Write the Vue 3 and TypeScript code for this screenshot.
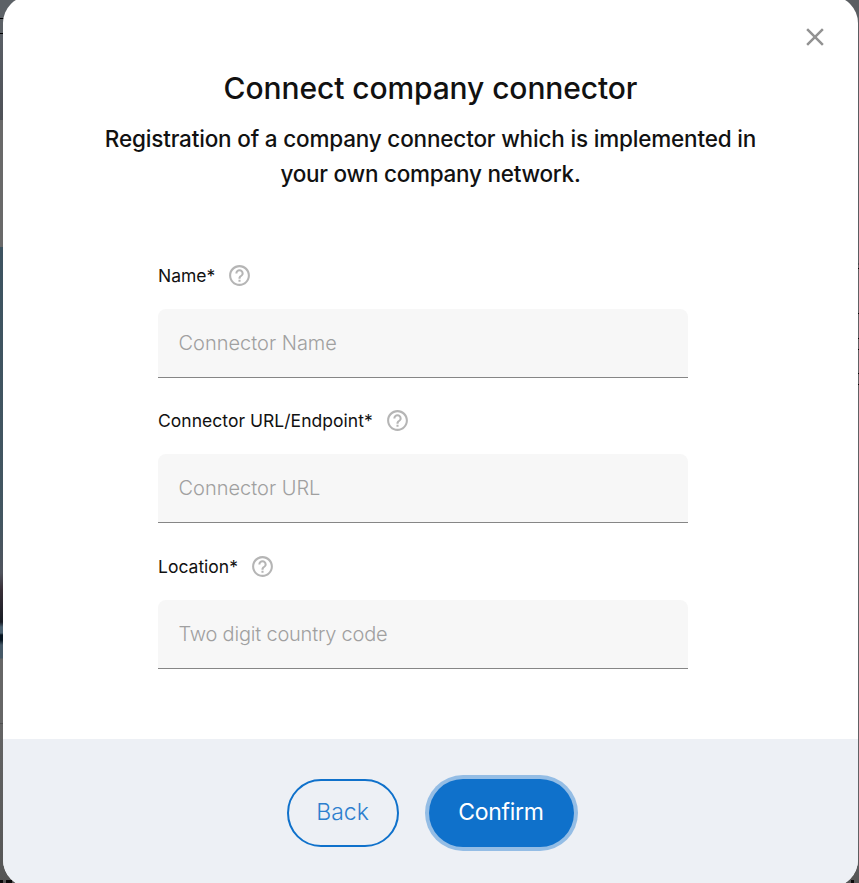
<script setup lang="ts">
import { ref } from 'vue'

interface Field {
  id: string
  label: string
  placeholder: string
}

const fields: Field[] = [
  { id: 'name', label: 'Name*', placeholder: 'Connector Name' },
  { id: 'url', label: 'Connector URL/Endpoint*', placeholder: 'Connector URL' },
  { id: 'location', label: 'Location*', placeholder: 'Two digit country code' },
]

const values = ref<Record<string, string>>({ name: '', url: '', location: '' })
</script>

<template>
  <div class="backdrop">
    <div class="page-edge left"></div>
    <div class="page-edge right"></div>
    <section class="dialog" role="dialog" aria-labelledby="dialog-title">
      <button class="close" type="button" aria-label="Close">
        <svg viewBox="0 0 24 24" width="30" height="30">
          <path d="M19 6.41 17.59 5 12 10.59 6.41 5 5 6.41 10.59 12 5 17.59 6.41 19 12 13.41 17.59 19 19 17.59 13.41 12z" />
        </svg>
      </button>
      <header class="heading">
        <h1 id="dialog-title">Connect company connector</h1>
        <p><span class="line-a">Registration of a company connector which is implemented in</span><br /><span class="line-b">your own company network.</span></p>
      </header>
      <form class="fields" @submit.prevent>
        <div v-for="field in fields" :key="field.id" class="field">
          <div class="label-row">
            <label :for="field.id" :class="`label-${field.id}`">{{ field.label }}</label>
            <svg class="help" viewBox="0 0 24 24" width="25" height="25">
              <path d="M11 18h2v-2h-2v2zm1-16C6.48 2 2 6.48 2 12s4.48 10 10 10 10-4.48 10-10S17.52 2 12 2zm0 18c-4.41 0-8-3.59-8-8s3.59-8 8-8 8 3.59 8 8-3.59 8-8 8zm0-14c-2.21 0-4 1.79-4 4h2c0-1.1.9-2 2-2s2 .9 2 2c0 2-3 1.75-3 5h2c0-2.25 3-2.5 3-5 0-2.21-1.79-4-4-4z" />
            </svg>
          </div>
          <input :id="field.id" v-model="values[field.id]" :class="`input-${field.id}`" type="text" :placeholder="field.placeholder" />
        </div>
      </form>
      <footer class="actions">
        <button class="btn back" type="button">Back</button>
        <button class="btn confirm" type="button">Confirm</button>
      </footer>
    </section>
  </div>
</template>

<style>
body {
  overflow: hidden;
}
</style>

<style scoped>
.backdrop {
  position: relative;
  box-sizing: border-box;
  height: 883px;
  padding: 0 1px 0 3px;
  overflow: hidden;
  background: #606164;
  font-family: Inter, "Liberation Sans", sans-serif;
  color: #111;
}

.page-edge {
  position: absolute;
  top: 0;
  width: 14px;
  height: 883px;
}

.page-edge.left {
  left: 0;
  background:
    linear-gradient(#0a0a0a, #0a0a0a) 0 880px / 3px 3px no-repeat,
    linear-gradient(#0a0a0a, #0a0a0a) 6px 880px / 6px 3px no-repeat,
    linear-gradient(
      #5c6166 0 18px, #000 18px 19px, #5c6166 19px 33px, #000 33px 34px,
      #5a5f66 34px, #4e5157 120px, #696969 120px 247px, #3d5360 247px,
      #435661 520px, #50545d 573px, #382f37 590px, #181c24 622px,
      #4a6070 627px 633px, #061521 635px 640px, #465967 645px 658px,
      #666 659px 723px, #505050 723px 724px, #646464 724px, #555 883px
    );
}

.page-edge.right {
  right: 0;
  background:
    linear-gradient(#0a0a0a, #0a0a0a) 6px 880px / 3px 3px no-repeat,
    linear-gradient(
      #5a5d61 0 263px, #45484c 263px 265px, #606164 265px 268px, #000 268px 269px,
      #606164 269px 313px, #000 313px 314px, #606164 314px 338px, #000 338px 339px,
      #606164 339px 349px, #000 349px 350px, #606164 350px 373px, #000 373px 374px,
      #606164 374px 384px, #000 384px 385px, #606164 385px 840px, #555 883px
    );
}

.dialog {
  position: relative;
  display: flex;
  flex-direction: column;
  box-sizing: border-box;
  height: 891px;
  margin-top: -4px;
  overflow: hidden;
  border-radius: 27px;
  background: #fff;
}

.close {
  position: absolute;
  top: 26px;
  right: 28px;
  width: 30px;
  height: 30px;
  padding: 0;
  border: 0;
  background: none;
}

.close svg {
  display: block;
  fill: #939393;
}

.heading {
  padding-top: 70px;
  text-align: center;
}

h1 {
  margin: 0;
  font-size: 30px;
  line-height: 44px;
  font-weight: 500;
  letter-spacing: -0.1px;
}

.heading p {
  margin: 11px 0 0;
  font-size: 22.5px;
  line-height: 35px;
  font-weight: 500;
  white-space: nowrap;
}

.line-a {
  letter-spacing: -0.18px;
}

.line-b {
  letter-spacing: -0.26px;
}

.fields {
  display: flex;
  flex-direction: column;
  gap: 30.4px;
  width: 530px;
  margin: 72px 0 0 155px;
}

.field {
  display: flex;
  flex-direction: column;
  gap: 21px;
  height: 115px;
}

.label-row {
  display: flex;
  align-items: center;
  gap: 12px;
  height: 25px;
}

label {
  font-size: 17.5px;
  line-height: 25px;
}

.label-url {
  letter-spacing: 0.03px;
}

.help {
  fill: #b5b5b5;
}

input {
  box-sizing: border-box;
  width: 530px;
  height: 69px;
  padding: 0 20.5px;
  border: 0;
  border-bottom: 1px solid #868686;
  border-radius: 8px 8px 0 0;
  outline: 0;
  background: #f7f7f7;
  font: 300 20px Inter, "Liberation Sans", sans-serif;
  color: #111;
}

.input-location {
  letter-spacing: -0.2px;
}

input::placeholder {
  color: #a0a0a0;
  opacity: 1;
}

.actions {
  display: flex;
  justify-content: center;
  align-items: flex-start;
  gap: 30px;
  box-sizing: border-box;
  height: 148px;
  margin-top: auto;
  padding: 40px 1px 0 0;
  background: #edf0f5;
}

.btn {
  box-sizing: border-box;
  height: 68px;
  padding: 0 0 2px;
  border-radius: 34px;
  font: 400 23px Inter, "Liberation Sans", sans-serif;
}

.back {
  width: 112px;
  border: 2px solid #0f71cb;
  background: transparent;
  color: #2d7fce;
  font-weight: 300;
}

.confirm {
  width: 145px;
  border: 0;
  background: #0f71cb;
  box-shadow: 0 0 0 4px #94bde5;
  color: #fff;
  letter-spacing: -0.3px;
}
</style>
